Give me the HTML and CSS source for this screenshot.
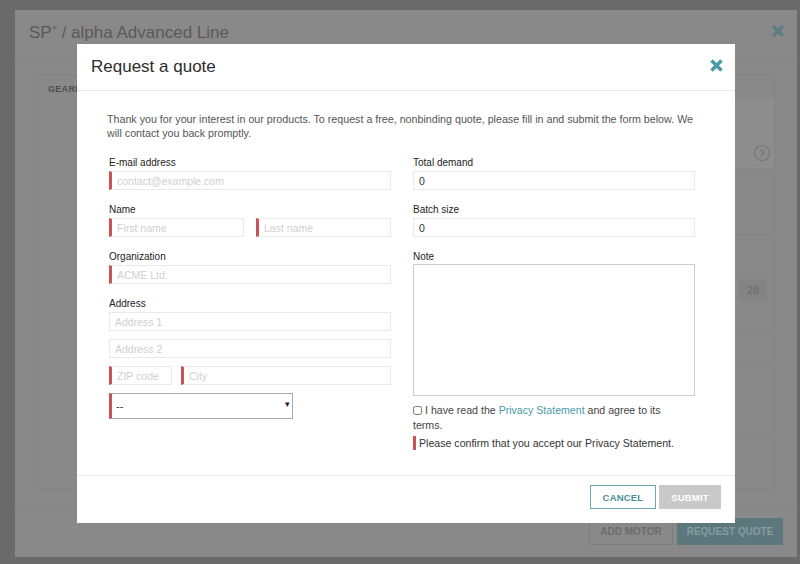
FILE: index.html
```html
<!DOCTYPE html>
<html lang="en">
<head>
    <meta charset="UTF-8">
    <meta name="viewport" content="width=device-width, initial-scale=1.0">
    <title>Request a quote</title>
    <link rel="stylesheet" href="styles.css">
</head>
<body>
    <div class="topnav">
        <span>Products</span><span>Gearheads</span><span>Actuators</span>
        <span>Motors</span><span>Systems</span><span>Accessories</span>
        <span>Downloads</span><span>Contact</span>
    </div>

    <div class="panel">
        <div class="panel-head">
            <span class="panel-title">SP<sup>+</sup> / alpha Advanced Line</span>
            <svg class="panel-close" width="14" height="14" viewBox="0 0 14 14">
                <path d="M2 2 L12 12 M12 2 L2 12" stroke="#5f7d84" stroke-width="3.4"/>
            </svg>
        </div>
        <div class="panel-body">
            <div class="config">
                <div class="config-title">GEARBOX</div>
                <div class="config-side">
                    <div class="side-box">
                        <svg width="18" height="18" viewBox="0 0 18 18">
                            <circle cx="9" cy="9" r="7.5" fill="none" stroke="#767676" stroke-width="1.2"/>
                            <path d="M7.5 5.5 L11 9 L7.5 12.5" fill="none" stroke="#767676" stroke-width="1.4"/>
                        </svg>
                    </div>
                    <div class="side-row"></div>
                    <div class="side-row num-row"><span class="num">28</span></div>
                    <div class="side-row short"></div>
                    <div class="side-row"></div>
                </div>
            </div>
        </div>
        <div class="panel-foot">
            <button class="bg-btn bg-outline">ADD MOTOR</button>
            <button class="bg-btn bg-solid">REQUEST QUOTE</button>
        </div>
    </div>

    <div class="overlay">
        <div class="modal">
            <div class="modal-head">
                <h2>Request a quote</h2>
                <svg class="modal-close" width="15" height="15" viewBox="0 0 15 15">
                    <path d="M2.5 2.5 L12.5 12.5 M12.5 2.5 L2.5 12.5" stroke="#4a9ba6" stroke-width="3.6"/>
                </svg>
            </div>
            <div class="modal-body">
                <p class="intro">Thank you for your interest in our products. To request a free, nonbinding quote, please fill in and submit the form below. We will contact you back promptly.</p>
                <div class="form">
                    <div class="col">
                        <div class="group">
                            <label>E-mail address</label>
                            <input class="field req" type="text" placeholder="contact@example.com">
                        </div>
                        <div class="group">
                            <label>Name</label>
                            <div class="pair">
                                <input class="field req" type="text" placeholder="First name">
                                <input class="field req" type="text" placeholder="Last name">
                            </div>
                        </div>
                        <div class="group">
                            <label>Organization</label>
                            <input class="field req" type="text" placeholder="ACME Ltd.">
                        </div>
                        <div class="group stack">
                            <label>Address</label>
                            <input class="field" type="text" placeholder="Address 1">
                            <input class="field" type="text" placeholder="Address 2">
                            <div class="pair zip-row">
                                <input class="field req zip" type="text" placeholder="ZIP code">
                                <input class="field req" type="text" placeholder="City">
                            </div>
                            <div class="select-wrap">
                                <select class="select">
                                    <option>--</option>
                                </select>
                                <span class="caret">&#9662;</span>
                            </div>
                        </div>
                    </div>
                    <div class="col">
                        <div class="group">
                            <label>Total demand</label>
                            <input class="field" type="text" value="0">
                        </div>
                        <div class="group">
                            <label>Batch size</label>
                            <input class="field" type="text" value="0">
                        </div>
                        <div class="group note">
                            <label>Note</label>
                            <textarea class="textarea"></textarea>
                        </div>
                        <div class="agree">
                            <input type="checkbox" class="check">I have read the <a href="#">Privacy Statement</a> and agree to its terms.
                        </div>
                        <div class="error">Please confirm that you accept our Privacy Statement.</div>
                    </div>
                </div>
            </div>
            <div class="modal-foot">
                <button class="btn btn-cancel">CANCEL</button>
                <button class="btn btn-submit">SUBMIT</button>
            </div>
        </div>
    </div>
</body>
</html>
```

FILE: styles.css
```css
body {
    margin: 0;
    font-family: "Liberation Sans", Arial, sans-serif;
    background-color: #6a6a6a;
    height: 564px;
    overflow: hidden;
}
.topnav {
    height: 10px;
    overflow: hidden;
    display: flex;
    gap: 48px;
    padding-left: 20px;
}
.topnav span {
    margin-top: -11px;
    font-size: 12px;
    color: #727272;
}
.panel {
    margin-left: 15px;
    width: 782px;
    height: 547px;
    background-color: #898989;
    display: flex;
    flex-direction: column;
}
.panel-head {
    height: 46px;
    border-bottom: 1px solid #848484;
    padding: 0 12px 0 14px;
    display: flex;
    align-items: center;
    justify-content: space-between;
}
.panel-title {
    font-size: 17px;
    color: #595959;
}
.panel-title sup {
    font-size: 9px;
}
.panel-close {
    margin-top: -5px;
}
.panel-body {
    flex: 1;
    padding: 18px 22px 0 22px;
}
.config {
    height: 413px;
    border: 1px solid #848484;
    position: relative;
}
.config-title {
    font-size: 9px;
    font-weight: bold;
    color: #4e4e4e;
    padding: 8px 0 0 10px;
    letter-spacing: 0.3px;
}
.config-side {
    position: absolute;
    right: 0;
    top: 22px;
    width: 40px;
}
.side-box {
    height: 64px;
    background-color: #8d8d8d;
    border-bottom: 1px solid #848484;
    display: flex;
    align-items: flex-end;
    justify-content: flex-end;
    padding: 0 3px 6px 0;
}
.side-row {
    height: 66px;
    border-bottom: 1px solid #848484;
}
.side-row.num-row {
    height: 95px;
    padding-top: 43px;
    box-sizing: border-box;
}
.side-row.short {
    height: 34px;
}
.num {
    display: inline-block;
    margin-left: 5px;
    width: 28px;
    height: 22px;
    line-height: 22px;
    text-align: center;
    background-color: #848484;
    font-size: 11px;
    color: #6a6a6a;
}
.panel-foot {
    border-top: 1px solid #848484;
    height: 46px;
    box-sizing: border-box;
    padding: 6px 14px 0 0;
    display: flex;
    justify-content: flex-end;
    gap: 4px;
}
.bg-btn {
    height: 27px;
    border: 1px solid #7d7d7d;
    font-family: "Liberation Sans", Arial, sans-serif;
    font-size: 10px;
    font-weight: bold;
    padding: 0;
}
.bg-outline {
    width: 84px;
    background: transparent;
    color: #6c6c6c;
}
.bg-solid {
    width: 106px;
    background-color: #5c787d;
    border-color: #5c787d;
    color: #869ca0;
}

.overlay {
    position: fixed;
    inset: 0;
}
.modal {
    position: absolute;
    left: 77px;
    top: 44px;
    width: 658px;
    height: 479px;
    background: white;
    display: flex;
    flex-direction: column;
}
.modal-head {
    height: 46px;
    border-bottom: 1px solid #e8e8e8;
    padding: 0 11px 0 14px;
    display: flex;
    align-items: center;
    justify-content: space-between;
}
.modal-head h2 {
    margin: 0;
    font-size: 17px;
    font-weight: normal;
    color: #2e2e2e;
}
.modal-close {
    margin-top: -3px;
}
.modal-body {
    height: 384px;
    box-sizing: border-box;
    padding: 21px 36px 0 30px;
}
.intro {
    margin: 0 0 16px 0;
    font-size: 10.7px;
    line-height: 14px;
    color: #555;
}
.form {
    display: flex;
    gap: 22px;
    padding-left: 2px;
}
.col {
    width: 282px;
}
.group {
    margin-bottom: 13px;
}
.group label {
    display: block;
    font-size: 10px;
    line-height: 14px;
    color: #222;
    margin-bottom: 1px;
}
.field {
    display: block;
    box-sizing: border-box;
    width: 100%;
    height: 19px;
    border: 1px solid #e9e9e9;
    padding: 0 5px;
    font-family: "Liberation Sans", Arial, sans-serif;
    font-size: 10.5px;
    color: #333;
    outline: none;
}
.field::placeholder {
    color: #cfcfcf;
}
.field.req {
    border-left: 3px solid #c8535b;
    padding-left: 5px;
}
.pair {
    display: flex;
    gap: 12px;
}
.pair .field {
    flex: 1;
    min-width: 0;
}
.stack .field {
    margin-bottom: 8px;
}
.zip-row {
    gap: 9px;
    margin-bottom: 8px;
}
.zip-row .field {
    margin-bottom: 0;
}
.pair .field.zip {
    flex: 0 0 63px;
}
.select-wrap {
    position: relative;
    width: 184px;
}
.select {
    display: block;
    width: 100%;
    height: 26px;
    box-sizing: border-box;
    border: 1px solid #a8a8a8;
    border-left: 3px solid #c8535b;
    background: white;
    appearance: none;
    -webkit-appearance: none;
    border-radius: 0;
    padding: 0 4px;
    font-family: "Liberation Sans", Arial, sans-serif;
    font-size: 11px;
    color: #333;
}
.caret {
    position: absolute;
    right: 3px;
    top: 6px;
    font-size: 9px;
    color: #222;
    pointer-events: none;
}
.note {
    margin-bottom: 7px;
}
.note label {
    margin-bottom: 0;
}
.textarea {
    display: block;
    box-sizing: border-box;
    width: 100%;
    height: 132px;
    border: 1px solid #cdcdcd;
    resize: none;
}
.agree {
    max-width: 262px;
    font-size: 10.6px;
    line-height: 15px;
    color: #444;
}
.check {
    width: 9px;
    height: 9px;
    margin: 0 3px 0 0;
    vertical-align: -1px;
}
.agree a {
    color: #4a9ba6;
    text-decoration: none;
}
.error {
    margin-top: 3px;
    border-left: 3px solid #c8535b;
    padding-left: 3px;
    font-size: 10.6px;
    line-height: 14px;
    color: #333;
}
.modal-foot {
    border-top: 1px solid #e8e8e8;
    padding: 9px 14px 0 0;
    display: flex;
    justify-content: flex-end;
    gap: 3px;
}
.btn {
    height: 24px;
    padding: 0;
    font-family: "Liberation Sans", Arial, sans-serif;
    font-size: 9.5px;
    font-weight: bold;
    letter-spacing: 0.2px;
    cursor: pointer;
}
.btn-cancel {
    width: 66px;
    background: white;
    border: 1px solid #6aaab2;
    color: #4b8f98;
}
.btn-submit {
    width: 62px;
    background-color: #c9c9c9;
    border: 1px solid #c9c9c9;
    color: white;
}
```
